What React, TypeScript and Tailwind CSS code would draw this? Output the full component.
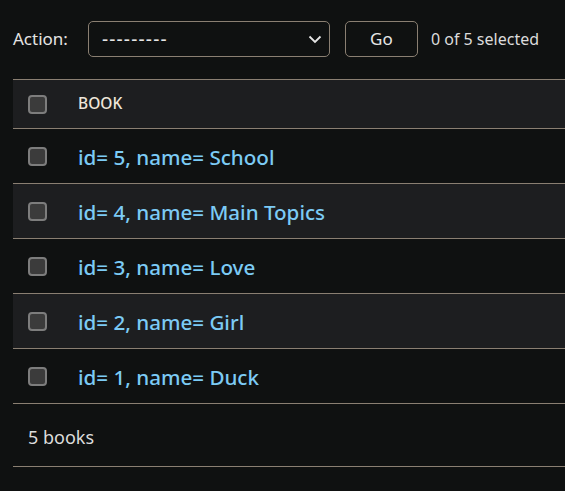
import React from "react";

const books = [
  { id: 5, name: "School" },
  { id: 4, name: "Main Topics" },
  { id: 3, name: "Love" },
  { id: 2, name: "Girl" },
  { id: 1, name: "Duck" },
];

const Checkbox: React.FC = () => (
  <span className="block w-[19px] h-[19px] rounded-[4px] border-2 border-[#7d7d7d] bg-[#3b3b3b]" />
);

const App: React.FC = () => {
  return (
    <div className="min-h-[491px] w-[565px] overflow-hidden bg-[#0f1111] text-[#e6e6e6] font-['Noto_Sans',sans-serif]">
      <div className="pl-[13px] pt-[21px]">
        {/* actions bar */}
        <div className="flex items-center h-[36px]">
          <span className="text-[17px] text-[#e4e4e4]">Action:</span>
          <div className="ml-[20px] w-[242px] h-[36px] flex items-center justify-between rounded-[5px] border border-[#8a7f72] pl-[13px] pr-[7px]">
            <span className="text-[19px] tracking-[1.2px]">---------</span>
            <svg width="14" height="9" viewBox="0 0 14 9" fill="none">
              <path d="M1.5 1.5 L7 7 L12.5 1.5" stroke="#e6e6e6" strokeWidth="1.8" />
            </svg>
          </div>
          <button className="ml-[15px] w-[73px] h-[36px] rounded-[5px] border border-[#8a7f72] text-[17px] text-[#e6e6e6]">
            Go
          </button>
          <span className="ml-[13px] text-[16px] text-[#dcdcdc]">0 of 5 selected</span>
        </div>

        {/* results table */}
        <div className="mt-[22px] w-[620px]">
          <div className="flex items-center h-[50px] bg-[#1d1e20] border-y border-[#8a7f72]">
            <div className="pl-[15px] w-[65px]">
              <Checkbox />
            </div>
            <span className="text-[15.5px] font-medium text-[#eee6da]">BOOK</span>
          </div>
          {books.map((b, i) => (
            <div
              key={b.id}
              className={
                "flex items-center h-[55px] border-b border-[#8a7f72] " +
                (i % 2 === 1 ? "bg-[#1d1e20]" : "bg-[#0f1111]")
              }
            >
              <div className="pl-[15px] w-[65px]">
                <Checkbox />
              </div>
              <a className="pt-[2px] text-[20.6px] font-medium text-[#7ccbf5]">
                id= {b.id}, name= {b.name}
              </a>
            </div>
          ))}
          <div className="flex items-center h-[63px] pl-[15px] pt-[4px] border-b border-[#8a7f72]">
            <span className="text-[18px] text-[#dcdcdc]">5 books</span>
          </div>
        </div>
      </div>
    </div>
  );
};

export default App;
